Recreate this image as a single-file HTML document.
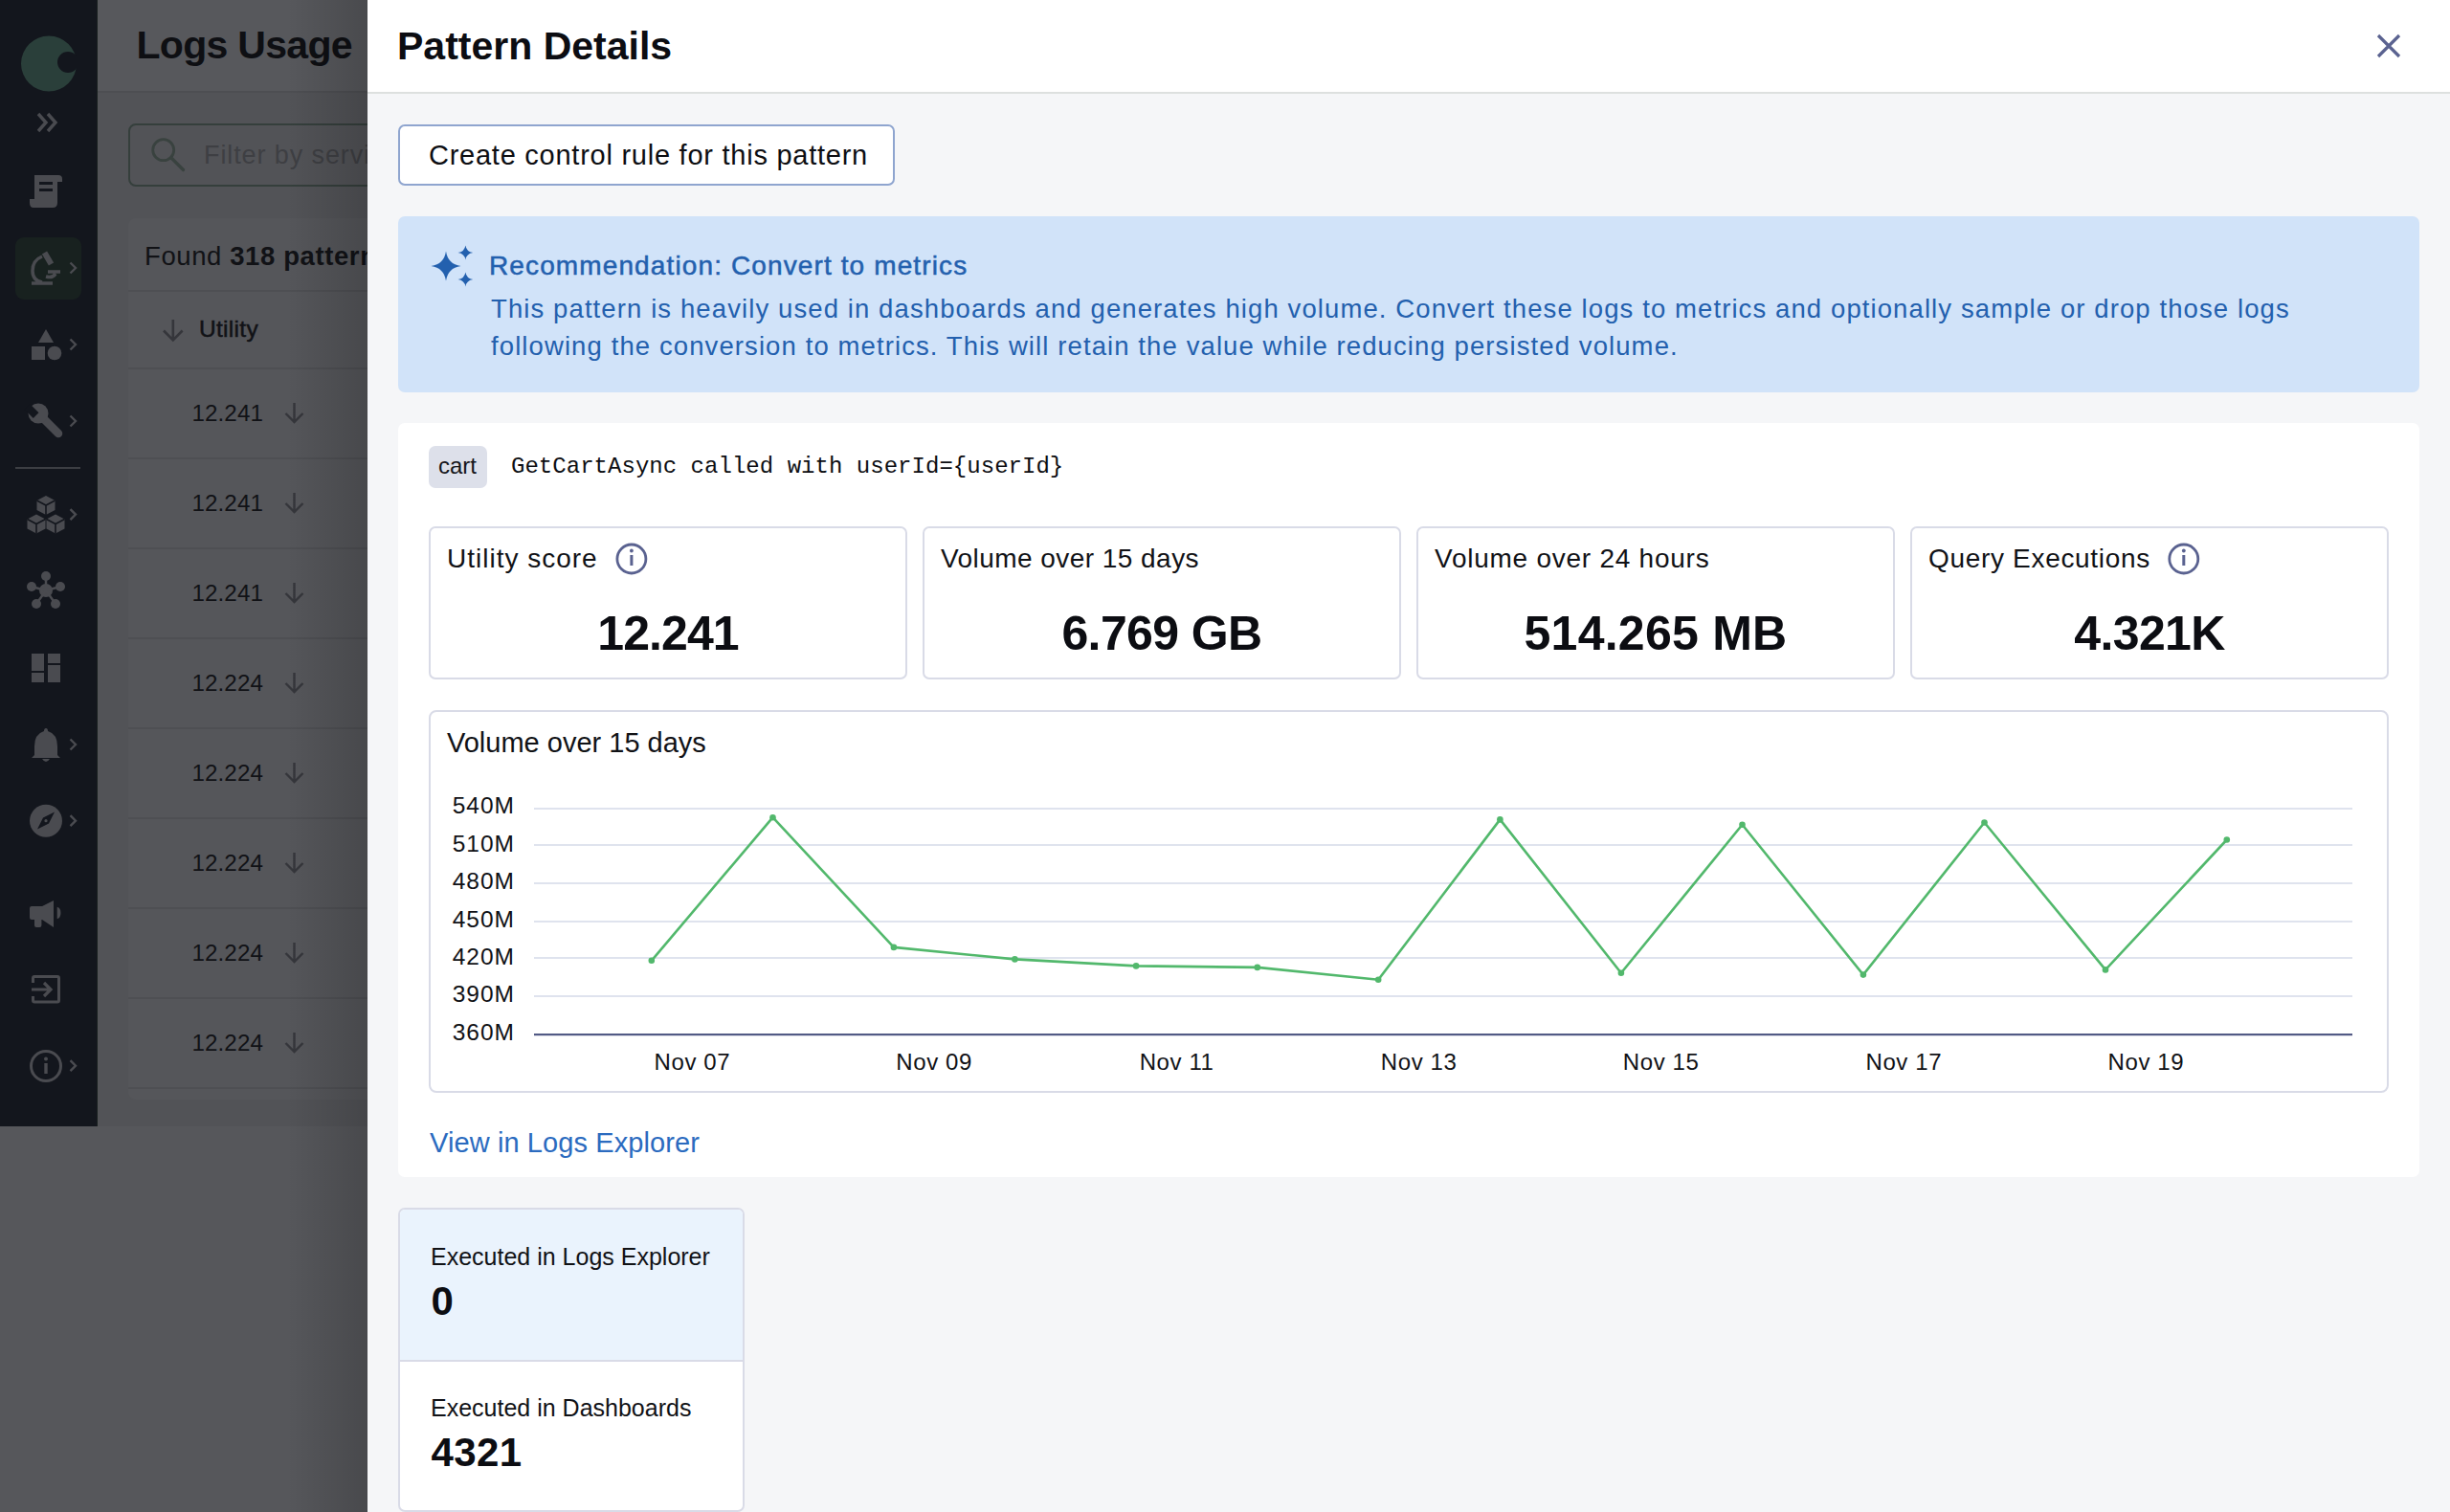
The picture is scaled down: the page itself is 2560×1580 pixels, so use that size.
<!DOCTYPE html>
<html><head><meta charset="utf-8"><title>Pattern Details</title>
<style>
html,body{margin:0;padding:0;overflow:hidden;}
body{width:2560px;height:1580px;overflow:hidden;position:relative;background:#56575b;font-family:"Liberation Sans", sans-serif;}
.t{position:absolute;white-space:nowrap;}
.r{position:absolute;box-sizing:border-box;}
svg{position:absolute;overflow:visible;}
</style></head><body>
<div class="r" style="left:0px;top:0px;width:384px;height:1580px;background:#56575b;"></div>
<div class="r" style="left:102px;top:0px;width:282px;height:95px;background:#57585c;"></div>
<div class="r" style="left:102px;top:95px;width:282px;height:2px;background:#4d4e52;"></div>
<div class="r" style="left:102px;top:97px;width:282px;height:1080px;background:#525357;"></div>
<div class="r" style="left:0px;top:0px;width:102px;height:1177px;background:#13161d;"></div>
<div class="r" style="left:101px;top:0px;width:1px;height:1177px;background:#18201f;"></div>
<div class="t" style="left:142.5px;top:26.69px;font-size:41px;line-height:41px;color:#0e0f13;font-weight:700;font-family:'Liberation Sans', sans-serif;letter-spacing:-0.7px;">Logs Usage</div>
<div class="r" style="left:134px;top:128.5px;width:300px;height:66px;background:transparent;border:2px solid #353f3c;border-radius:8px;"></div>
<svg style="left:0;top:0" width="384" height="400"><circle cx="170.7" cy="156.7" r="11" fill="none" stroke="#39423f" stroke-width="2.8"/><line x1="179" y1="165" x2="191.5" y2="177.5" stroke="#39423f" stroke-width="3.2" stroke-linecap="round"/></svg>
<div class="t" style="left:213px;top:148.54px;font-size:27px;line-height:27px;color:#3e3f43;font-weight:400;font-family:'Liberation Sans', sans-serif;letter-spacing:0.9px;">Filter by service</div>
<div class="r" style="left:134px;top:228px;width:280px;height:921px;background:#55565a;border-radius:8px;"></div>
<div class="t" style="left:151px;top:254.22px;font-size:27.5px;line-height:27.5px;color:#111216;font-weight:400;font-family:'Liberation Sans', sans-serif;letter-spacing:0.6px;">Found <b>318 patterns</b></div>
<div class="r" style="left:134px;top:303px;width:250px;height:2px;background:#4e4f53;"></div>
<svg style="left:0;top:0" width="384" height="400"><path d="M180.8 334 V355 M171 345.5 L180.8 355.3 L190.6 345.5" fill="none" stroke="#35363b" stroke-width="2.6"/></svg>
<div class="t" style="left:208px;top:332.26px;font-size:24.5px;line-height:24.5px;color:#111216;font-weight:400;font-family:'Liberation Sans', sans-serif;letter-spacing:0.3px;-webkit-text-stroke:0.5px #111216;">Utility</div>
<div class="r" style="left:134px;top:384px;width:250px;height:2px;background:#4e4f53;"></div>
<div class="t" style="left:-725px;width:1000px;text-align:right;top:419.51px;font-size:24.2px;line-height:24.2px;color:#111216;font-weight:400;font-family:'Liberation Sans', sans-serif;letter-spacing:0.1px;">12.241</div>
<svg style="left:0;top:0" width="384" height="1200"><path d="M307.5 421 V441 M298.5 432 L307.5 441 L316.5 432" fill="none" stroke="#35363b" stroke-width="2.4"/></svg>
<div class="r" style="left:134px;top:478px;width:250px;height:2px;background:#4e4f53;"></div>
<div class="t" style="left:-725px;width:1000px;text-align:right;top:513.51px;font-size:24.2px;line-height:24.2px;color:#111216;font-weight:400;font-family:'Liberation Sans', sans-serif;letter-spacing:0.1px;">12.241</div>
<svg style="left:0;top:0" width="384" height="1200"><path d="M307.5 515 V535 M298.5 526 L307.5 535 L316.5 526" fill="none" stroke="#35363b" stroke-width="2.4"/></svg>
<div class="r" style="left:134px;top:572px;width:250px;height:2px;background:#4e4f53;"></div>
<div class="t" style="left:-725px;width:1000px;text-align:right;top:607.51px;font-size:24.2px;line-height:24.2px;color:#111216;font-weight:400;font-family:'Liberation Sans', sans-serif;letter-spacing:0.1px;">12.241</div>
<svg style="left:0;top:0" width="384" height="1200"><path d="M307.5 609 V629 M298.5 620 L307.5 629 L316.5 620" fill="none" stroke="#35363b" stroke-width="2.4"/></svg>
<div class="r" style="left:134px;top:666px;width:250px;height:2px;background:#4e4f53;"></div>
<div class="t" style="left:-725px;width:1000px;text-align:right;top:701.51px;font-size:24.2px;line-height:24.2px;color:#111216;font-weight:400;font-family:'Liberation Sans', sans-serif;letter-spacing:0.1px;">12.224</div>
<svg style="left:0;top:0" width="384" height="1200"><path d="M307.5 703 V723 M298.5 714 L307.5 723 L316.5 714" fill="none" stroke="#35363b" stroke-width="2.4"/></svg>
<div class="r" style="left:134px;top:760px;width:250px;height:2px;background:#4e4f53;"></div>
<div class="t" style="left:-725px;width:1000px;text-align:right;top:795.51px;font-size:24.2px;line-height:24.2px;color:#111216;font-weight:400;font-family:'Liberation Sans', sans-serif;letter-spacing:0.1px;">12.224</div>
<svg style="left:0;top:0" width="384" height="1200"><path d="M307.5 797 V817 M298.5 808 L307.5 817 L316.5 808" fill="none" stroke="#35363b" stroke-width="2.4"/></svg>
<div class="r" style="left:134px;top:854px;width:250px;height:2px;background:#4e4f53;"></div>
<div class="t" style="left:-725px;width:1000px;text-align:right;top:889.51px;font-size:24.2px;line-height:24.2px;color:#111216;font-weight:400;font-family:'Liberation Sans', sans-serif;letter-spacing:0.1px;">12.224</div>
<svg style="left:0;top:0" width="384" height="1200"><path d="M307.5 891 V911 M298.5 902 L307.5 911 L316.5 902" fill="none" stroke="#35363b" stroke-width="2.4"/></svg>
<div class="r" style="left:134px;top:948px;width:250px;height:2px;background:#4e4f53;"></div>
<div class="t" style="left:-725px;width:1000px;text-align:right;top:983.51px;font-size:24.2px;line-height:24.2px;color:#111216;font-weight:400;font-family:'Liberation Sans', sans-serif;letter-spacing:0.1px;">12.224</div>
<svg style="left:0;top:0" width="384" height="1200"><path d="M307.5 985 V1005 M298.5 996 L307.5 1005 L316.5 996" fill="none" stroke="#35363b" stroke-width="2.4"/></svg>
<div class="r" style="left:134px;top:1042px;width:250px;height:2px;background:#4e4f53;"></div>
<div class="t" style="left:-725px;width:1000px;text-align:right;top:1077.51px;font-size:24.2px;line-height:24.2px;color:#111216;font-weight:400;font-family:'Liberation Sans', sans-serif;letter-spacing:0.1px;">12.224</div>
<svg style="left:0;top:0" width="384" height="1200"><path d="M307.5 1079 V1099 M298.5 1090 L307.5 1099 L316.5 1090" fill="none" stroke="#35363b" stroke-width="2.4"/></svg>
<div class="r" style="left:134px;top:1136px;width:250px;height:2px;background:#4e4f53;"></div>
<div class="r" style="left:300px;top:0px;width:84px;height:1580px;background:linear-gradient(to right, rgba(0,0,0,0), rgba(0,0,0,0.16));"></div>
<svg style="left:0;top:0" width="102" height="1180"><circle cx="51" cy="66.5" r="29" fill="#2a3f3a"/><circle cx="71" cy="65" r="11" fill="#13161d"/><rect x="80" y="50" width="10" height="30" fill="#13161d"/><path d="M40 119 L48 128 L40 137 M50 119 L58 128 L50 137" fill="none" stroke="#4a4b50" stroke-width="3.4"/><path d="M36 183 H61 Q65 183 65 187 V190 H60 V212 Q60 217 55 217 H35 Q31 217 31 212 V208 H36 Z" fill="#4a4b50"/><rect x="41" y="190" width="14" height="3" fill="#13161d"/><rect x="41" y="197" width="14" height="3" fill="#13161d"/><rect x="16" y="248" width="69" height="65" rx="9" fill="#18211f"/><path d="M44 268 Q34 272 34 283 Q34 293 44 295 M33 296 H55 M48 289 Q55 291 58 286 M50 284 H63" fill="none" stroke="#4a4b50" stroke-width="3.5"/><rect x="47" y="263" width="6" height="14" transform="rotate(-30 50 270)" fill="#4a4b50"/><path d="M73.5 274.5 L79 280 L73.5 285.5" fill="none" stroke="#4a4b50" stroke-width="2.4"/><path d="M73.5 354.5 L79 360 L73.5 365.5" fill="none" stroke="#4a4b50" stroke-width="2.4"/><path d="M73.5 434.5 L79 440 L73.5 445.5" fill="none" stroke="#4a4b50" stroke-width="2.4"/><path d="M73.5 532.1 L79 537.6 L73.5 543.1" fill="none" stroke="#4a4b50" stroke-width="2.4"/><path d="M73.5 772.5 L79 778 L73.5 783.5" fill="none" stroke="#4a4b50" stroke-width="2.4"/><path d="M73.5 852.2 L79 857.7 L73.5 863.2" fill="none" stroke="#4a4b50" stroke-width="2.4"/><path d="M73.5 1108.2 L79 1113.7 L73.5 1119.2" fill="none" stroke="#4a4b50" stroke-width="2.4"/><path d="M48 344 L56 358 H40 Z" fill="#4a4b50"/><rect x="33" y="362" width="14" height="14" fill="#4a4b50"/><circle cx="57" cy="369" r="7.3" fill="#4a4b50"/><path d="M42 434 L61 453" stroke="#4a4b50" stroke-width="8.5" stroke-linecap="round"/><circle cx="40" cy="432" r="10.5" fill="#4a4b50"/><rect x="29" y="423" width="8" height="13" transform="rotate(-45 33 429.5)" fill="#13161d"/><rect x="16" y="488" width="68" height="2" fill="#3c3e43"/><path d="M48 518 L57.5 523 V533 L48 538 L38.5 533 V523 Z" fill="#4a4b50"/><path d="M38.5 523 L48 528 L57.5 523 M48 528 V538" fill="none" stroke="#13161d" stroke-width="1.6"/><path d="M38 537.5 L47.5 542.5 V552.5 L38 557.5 L28.5 552.5 V542.5 Z" fill="#4a4b50"/><path d="M28.5 542.5 L38 547.5 L47.5 542.5 M38 547.5 V557.5" fill="none" stroke="#13161d" stroke-width="1.6"/><path d="M58 537.5 L67.5 542.5 V552.5 L58 557.5 L48.5 552.5 V542.5 Z" fill="#4a4b50"/><path d="M48.5 542.5 L58 547.5 L67.5 542.5 M58 547.5 V557.5" fill="none" stroke="#13161d" stroke-width="1.6"/><circle cx="48" cy="617" r="7" fill="#4a4b50"/><circle cx="48" cy="602" r="5" fill="#4a4b50"/><circle cx="33" cy="613" r="5" fill="#4a4b50"/><circle cx="63" cy="613" r="5" fill="#4a4b50"/><circle cx="38" cy="631" r="5" fill="#4a4b50"/><circle cx="58" cy="631" r="5" fill="#4a4b50"/><path d="M48 602 V617 L33 613 M48 617 L63 613 M48 617 L38 631 M48 617 L58 631" fill="none" stroke="#4a4b50" stroke-width="2.5"/><rect x="33" y="683" width="13" height="18" fill="#4a4b50"/><rect x="33" y="703" width="13" height="10" fill="#4a4b50"/><rect x="50" y="683" width="13" height="10" fill="#4a4b50"/><rect x="50" y="695" width="13" height="18" fill="#4a4b50"/><path d="M48 761 Q50 761 50 764 Q60 767 60 780 V789 L63 792 H33 L36 789 V780 Q36 767 46 764 Q46 761 48 761 Z" fill="#4a4b50"/><path d="M44 793 Q48 799 52 793 Z" fill="#4a4b50"/><circle cx="48" cy="857.7" r="17" fill="#4a4b50"/><path d="M57 848.5 L51 860.5 L39 866.5 L45 854.5 Z" fill="#13161d"/><circle cx="48" cy="857.7" r="1.6" fill="#4a4b50"/><path d="M33 947 H44 L56 941 V969 L44 961 H43.4 V967 Q43.4 969 41.4 969 H38 Q36 969 36 967 V961 H33 Q31 961 31 959 V949 Q31 947 33 947 Z" fill="#4a4b50"/><path d="M59.7 947.8 A4.3 6.3 0 0 1 59.7 960.3 Z" fill="#4a4b50"/><path d="M34.5 1027 V1022 Q34.5 1020.5 36 1020.5 H60 Q61.5 1020.5 61.5 1022 V1045.5 Q61.5 1047 60 1047 H36 Q34.5 1047 34.5 1045.5 V1041" fill="none" stroke="#4a4b50" stroke-width="3"/><path d="M33 1034 H53 M46 1027 L53 1034 L46 1041" fill="none" stroke="#4a4b50" stroke-width="3.2"/><circle cx="48" cy="1114" r="15.5" fill="none" stroke="#4a4b50" stroke-width="3"/><rect x="46.3" y="1111" width="3.4" height="11" fill="#4a4b50"/><circle cx="48" cy="1106.5" r="2" fill="#4a4b50"/></svg>
<div class="r" style="left:384px;top:0px;width:2176px;height:96px;background:#ffffff;"></div>
<div class="r" style="left:384px;top:96px;width:2176px;height:2px;background:#dde0df;"></div>
<div class="r" style="left:384px;top:98px;width:2176px;height:1482px;background:#f5f6f8;"></div>
<div class="t" style="left:415px;top:27.69px;font-size:41px;line-height:41px;color:#0c0d12;font-weight:700;font-family:'Liberation Sans', sans-serif;">Pattern Details</div>
<svg style="left:0;top:0" width="2560" height="100"><path d="M2485 37 L2507 59 M2507 37 L2485 59" stroke="#5a6290" stroke-width="3.2"/></svg>
<div class="r" style="left:416px;top:130px;width:519px;height:64px;background:#ffffff;border:2px solid #8fa5cf;border-radius:7px;"></div>
<div class="t" style="left:448px;top:147.65px;font-size:29px;line-height:29px;color:#0d0e12;font-weight:400;font-family:'Liberation Sans', sans-serif;letter-spacing:0.75px;">Create control rule for this pattern</div>
<div class="r" style="left:416px;top:226px;width:2112px;height:184px;background:#d1e3f9;border-radius:7px;"></div>
<svg style="left:0;top:0" width="600" height="320"><path d="M466 262.5 Q468 276 481.5 278 Q468 280 466 293.5 Q464 280 450.5 278 Q464 276 466 262.5 Z" fill="#2360ae"/><path d="M486.4 256.5 Q487.4 263 494.2 264 Q487.4 265 486.4 271.5 Q485.4 265 478.6 264 Q485.4 263 486.4 256.5 Z" fill="#2360ae"/><path d="M486.4 284.5 Q487.4 291 494.2 292 Q487.4 293 486.4 299.5 Q485.4 293 478.6 292 Q485.4 291 486.4 284.5 Z" fill="#2360ae"/></svg>
<div class="t" style="left:511px;top:264.10px;font-size:28px;line-height:28px;color:#2360ae;font-weight:400;font-family:'Liberation Sans', sans-serif;letter-spacing:1.12px;-webkit-text-stroke:0.5px #2360ae;">Recommendation: Convert to metrics</div>
<div class="t" style="left:513px;top:308.52px;font-size:27.5px;line-height:27.5px;color:#2360ae;font-weight:400;font-family:'Liberation Sans', sans-serif;letter-spacing:1.1px;">This pattern is heavily used in dashboards and generates high volume. Convert these logs to metrics and optionally sample or drop those logs</div>
<div class="t" style="left:513px;top:347.72px;font-size:27.5px;line-height:27.5px;color:#2360ae;font-weight:400;font-family:'Liberation Sans', sans-serif;letter-spacing:1.1px;">following the conversion to metrics. This will retain the value while reducing persisted volume.</div>
<div class="r" style="left:416px;top:442px;width:2112px;height:788px;background:#ffffff;border-radius:7px;"></div>
<div class="r" style="left:448px;top:466px;width:61px;height:44px;background:#dde0ea;border-radius:7px;"></div>
<div class="t" style="left:458px;top:475.08px;font-size:24px;line-height:24px;color:#15161a;font-weight:400;font-family:'Liberation Sans', sans-serif;">cart</div>
<div class="t" style="left:534px;top:475.50px;font-size:24px;line-height:24px;color:#0d0e12;font-weight:400;font-family:'Liberation Mono', monospace;letter-spacing:0.03px;">GetCartAsync called with userId={userId}</div>
<div class="r" style="left:448px;top:550px;width:500px;height:160px;background:#ffffff;border:2px solid #d9dbe7;border-radius:7px;"></div>
<div class="t" style="left:467px;top:570.40px;font-size:28px;line-height:28px;color:#111216;font-weight:400;font-family:'Liberation Sans', sans-serif;letter-spacing:1.0px;">Utility score</div>
<div class="t" style="left:198px;width:1000px;text-align:center;top:637.27px;font-size:50px;line-height:50px;color:#0c0d12;font-weight:700;font-family:'Liberation Sans', sans-serif;letter-spacing:-0.9px;">12.241</div>
<div class="r" style="left:964px;top:550px;width:500px;height:160px;background:#ffffff;border:2px solid #d9dbe7;border-radius:7px;"></div>
<div class="t" style="left:983px;top:570.40px;font-size:28px;line-height:28px;color:#111216;font-weight:400;font-family:'Liberation Sans', sans-serif;letter-spacing:0.45px;">Volume over 15 days</div>
<div class="t" style="left:714px;width:1000px;text-align:center;top:637.27px;font-size:50px;line-height:50px;color:#0c0d12;font-weight:700;font-family:'Liberation Sans', sans-serif;letter-spacing:-0.6px;">6.769 GB</div>
<div class="r" style="left:1480px;top:550px;width:500px;height:160px;background:#ffffff;border:2px solid #d9dbe7;border-radius:7px;"></div>
<div class="t" style="left:1499px;top:570.40px;font-size:28px;line-height:28px;color:#111216;font-weight:400;font-family:'Liberation Sans', sans-serif;letter-spacing:0.75px;">Volume over 24 hours</div>
<div class="t" style="left:1230px;width:1000px;text-align:center;top:637.27px;font-size:50px;line-height:50px;color:#0c0d12;font-weight:700;font-family:'Liberation Sans', sans-serif;letter-spacing:0.25px;">514.265 MB</div>
<div class="r" style="left:1996px;top:550px;width:500px;height:160px;background:#ffffff;border:2px solid #d9dbe7;border-radius:7px;"></div>
<div class="t" style="left:2015px;top:570.40px;font-size:28px;line-height:28px;color:#111216;font-weight:400;font-family:'Liberation Sans', sans-serif;letter-spacing:0.68px;">Query Executions</div>
<div class="t" style="left:1746px;width:1000px;text-align:center;top:637.27px;font-size:50px;line-height:50px;color:#0c0d12;font-weight:700;font-family:'Liberation Sans', sans-serif;letter-spacing:-0.6px;">4.321K</div>
<svg style="left:0;top:0" width="2560" height="700"><circle cx="659.9" cy="584" r="15" fill="none" stroke="#5a6290" stroke-width="2.8"/><rect x="658.4" y="580" width="3" height="11" fill="#5a6290"/><circle cx="659.9" cy="575.5" r="1.9" fill="#5a6290"/><circle cx="2281.8" cy="584" r="15" fill="none" stroke="#5a6290" stroke-width="2.8"/><rect x="2280.3" y="580" width="3" height="11" fill="#5a6290"/><circle cx="2281.8" cy="575.5" r="1.9" fill="#5a6290"/></svg>
<div class="r" style="left:448px;top:742px;width:2048px;height:400px;background:#ffffff;border:2px solid #d9dbe7;border-radius:8px;"></div>
<div class="t" style="left:467px;top:761.85px;font-size:29px;line-height:29px;color:#111216;font-weight:400;font-family:'Liberation Sans', sans-serif;">Volume over 15 days</div>
<svg style="left:0;top:0" width="2560" height="1200"><rect x="558" y="844" width="1900" height="2" fill="#dfe3ee"/><rect x="558" y="882" width="1900" height="2" fill="#dfe3ee"/><rect x="558" y="922" width="1900" height="2" fill="#dfe3ee"/><rect x="558" y="962" width="1900" height="2" fill="#dfe3ee"/><rect x="558" y="1000" width="1900" height="2" fill="#dfe3ee"/><rect x="558" y="1040" width="1900" height="2" fill="#dfe3ee"/><rect x="558" y="1080" width="1900" height="2.2" fill="#525a85"/><polyline points="680.8,1003.8 807.5,854.2 933.9,989.9 1060.4,1002.4 1187.1,1009.4 1313.8,1010.9 1440.2,1023.8 1567.4,856.4 1693.9,1016.8 1820.5,861.8 1946.9,1018.6 2073.5,859.5 2200,1013.4 2326.8,877.5" fill="none" stroke="#52b86c" stroke-width="2.6" stroke-linejoin="round"/><circle cx="680.8" cy="1003.8" r="3.3" fill="#52b86c"/><circle cx="807.5" cy="854.2" r="3.3" fill="#52b86c"/><circle cx="933.9" cy="989.9" r="3.3" fill="#52b86c"/><circle cx="1060.4" cy="1002.4" r="3.3" fill="#52b86c"/><circle cx="1187.1" cy="1009.4" r="3.3" fill="#52b86c"/><circle cx="1313.8" cy="1010.9" r="3.3" fill="#52b86c"/><circle cx="1440.2" cy="1023.8" r="3.3" fill="#52b86c"/><circle cx="1567.4" cy="856.4" r="3.3" fill="#52b86c"/><circle cx="1693.9" cy="1016.8" r="3.3" fill="#52b86c"/><circle cx="1820.5" cy="861.8" r="3.3" fill="#52b86c"/><circle cx="1946.9" cy="1018.6" r="3.3" fill="#52b86c"/><circle cx="2073.5" cy="859.5" r="3.3" fill="#52b86c"/><circle cx="2200" cy="1013.4" r="3.3" fill="#52b86c"/><circle cx="2326.8" cy="877.5" r="3.3" fill="#52b86c"/></svg>
<div class="t" style="left:-462px;width:1000px;text-align:right;top:830.26px;font-size:24.5px;line-height:24.5px;color:#111216;font-weight:400;font-family:'Liberation Sans', sans-serif;letter-spacing:1.0px;">540M</div>
<div class="t" style="left:-462px;width:1000px;text-align:right;top:869.68px;font-size:24.5px;line-height:24.5px;color:#111216;font-weight:400;font-family:'Liberation Sans', sans-serif;letter-spacing:1.0px;">510M</div>
<div class="t" style="left:-462px;width:1000px;text-align:right;top:909.10px;font-size:24.5px;line-height:24.5px;color:#111216;font-weight:400;font-family:'Liberation Sans', sans-serif;letter-spacing:1.0px;">480M</div>
<div class="t" style="left:-462px;width:1000px;text-align:right;top:948.52px;font-size:24.5px;line-height:24.5px;color:#111216;font-weight:400;font-family:'Liberation Sans', sans-serif;letter-spacing:1.0px;">450M</div>
<div class="t" style="left:-462px;width:1000px;text-align:right;top:987.94px;font-size:24.5px;line-height:24.5px;color:#111216;font-weight:400;font-family:'Liberation Sans', sans-serif;letter-spacing:1.0px;">420M</div>
<div class="t" style="left:-462px;width:1000px;text-align:right;top:1027.36px;font-size:24.5px;line-height:24.5px;color:#111216;font-weight:400;font-family:'Liberation Sans', sans-serif;letter-spacing:1.0px;">390M</div>
<div class="t" style="left:-462px;width:1000px;text-align:right;top:1066.78px;font-size:24.5px;line-height:24.5px;color:#111216;font-weight:400;font-family:'Liberation Sans', sans-serif;letter-spacing:1.0px;">360M</div>
<div class="t" style="left:223.39999999999998px;width:1000px;text-align:center;top:1098.48px;font-size:24px;line-height:24px;color:#111216;font-weight:400;font-family:'Liberation Sans', sans-serif;letter-spacing:0.6px;">Nov 07</div>
<div class="t" style="left:476.1px;width:1000px;text-align:center;top:1098.48px;font-size:24px;line-height:24px;color:#111216;font-weight:400;font-family:'Liberation Sans', sans-serif;letter-spacing:0.6px;">Nov 09</div>
<div class="t" style="left:729.5999999999999px;width:1000px;text-align:center;top:1098.48px;font-size:24px;line-height:24px;color:#111216;font-weight:400;font-family:'Liberation Sans', sans-serif;letter-spacing:0.6px;">Nov 11</div>
<div class="t" style="left:982.5999999999999px;width:1000px;text-align:center;top:1098.48px;font-size:24px;line-height:24px;color:#111216;font-weight:400;font-family:'Liberation Sans', sans-serif;letter-spacing:0.6px;">Nov 13</div>
<div class="t" style="left:1235.7px;width:1000px;text-align:center;top:1098.48px;font-size:24px;line-height:24px;color:#111216;font-weight:400;font-family:'Liberation Sans', sans-serif;letter-spacing:0.6px;">Nov 15</div>
<div class="t" style="left:1489.3px;width:1000px;text-align:center;top:1098.48px;font-size:24px;line-height:24px;color:#111216;font-weight:400;font-family:'Liberation Sans', sans-serif;letter-spacing:0.6px;">Nov 17</div>
<div class="t" style="left:1742.4px;width:1000px;text-align:center;top:1098.48px;font-size:24px;line-height:24px;color:#111216;font-weight:400;font-family:'Liberation Sans', sans-serif;letter-spacing:0.6px;">Nov 19</div>
<div class="t" style="left:449px;top:1179.65px;font-size:29px;line-height:29px;color:#2b6bbf;font-weight:400;font-family:'Liberation Sans', sans-serif;letter-spacing:0.1px;">View in Logs Explorer</div>
<div class="r" style="left:416px;top:1262px;width:362px;height:318px;background:#ffffff;border:2px solid #d9dbe7;border-radius:7px;"></div>
<div class="r" style="left:418px;top:1264px;width:358px;height:157px;background:#eaf3fd;border-radius:5px 5px 0 0;"></div>
<div class="r" style="left:418px;top:1421px;width:358px;height:2px;background:#d9dbe7;"></div>
<div class="t" style="left:450px;top:1300.84px;font-size:25px;line-height:25px;color:#111216;font-weight:400;font-family:'Liberation Sans', sans-serif;">Executed in Logs Explorer</div>
<div class="t" style="left:450.5px;top:1338.65px;font-size:42px;line-height:42px;color:#0c0d12;font-weight:700;font-family:'Liberation Sans', sans-serif;">0</div>
<div class="t" style="left:450px;top:1458.64px;font-size:25px;line-height:25px;color:#111216;font-weight:400;font-family:'Liberation Sans', sans-serif;">Executed in Dashboards</div>
<div class="t" style="left:450.5px;top:1496.85px;font-size:42px;line-height:42px;color:#0c0d12;font-weight:700;font-family:'Liberation Sans', sans-serif;letter-spacing:0.4px;">4321</div>
</body></html>
